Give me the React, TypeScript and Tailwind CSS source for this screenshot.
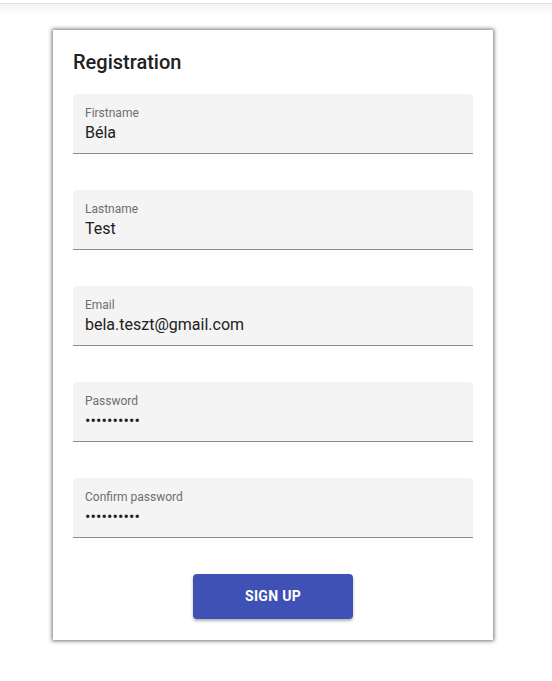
const fields = [
  { label: 'Firstname', value: 'Béla' },
  { label: 'Lastname', value: 'Test' },
  { label: 'Email', value: 'bela.teszt@gmail.com' },
  { label: 'Password', value: '••••••••••', secret: true },
  { label: 'Confirm password', value: '••••••••••', secret: true },
];

export default function App() {
  return (
    <div className="min-h-[681px] bg-white font-['Roboto','Liberation_Sans',sans-serif] text-[#212121]">
      {/* app bar shadow edge */}
      <div className="h-[3px] bg-white" />
      <div className="h-[12px] border-t border-[#e2e2e2] bg-gradient-to-b from-[#f3f3f3] to-white" />

      <div className="mt-[15px] flex justify-center pr-[6px]">
        <div className="w-[440px] bg-white px-[20px] pb-[21px] pt-[18px] shadow-[0_0_4px_1px_rgba(0,0,0,0.55)]">
          <h1 className="text-[20px] font-medium leading-[28px]">Registration</h1>

          <div className="mt-[18px] flex flex-col gap-[36px]">
            {fields.map((f) => (
              <div key={f.label} className="h-[60px] rounded-t-[4px] border-b border-[#8c8c8c] bg-[#f4f4f4] px-[12px] pt-[11px]">
                <div className="text-[12px] leading-[16px] text-[#6e6e6e]">{f.label}</div>
                <div className={f.secret ? 'mt-[2px] text-[16px] leading-[20px] tracking-[0.1px]' : 'mt-[2px] text-[16px] leading-[20px]'}>
                  {f.value}
                </div>
              </div>
            ))}
          </div>

          <div className="mt-[36px] flex justify-center">
            <button className="h-[45px] w-[160px] rounded-[4px] bg-[#3f51b5] text-[14px] font-bold tracking-[0.3px] text-white shadow-[0_2px_3px_rgba(0,0,0,0.3)]">
              SIGN UP
            </button>
          </div>
        </div>
      </div>
    </div>
  );
}
